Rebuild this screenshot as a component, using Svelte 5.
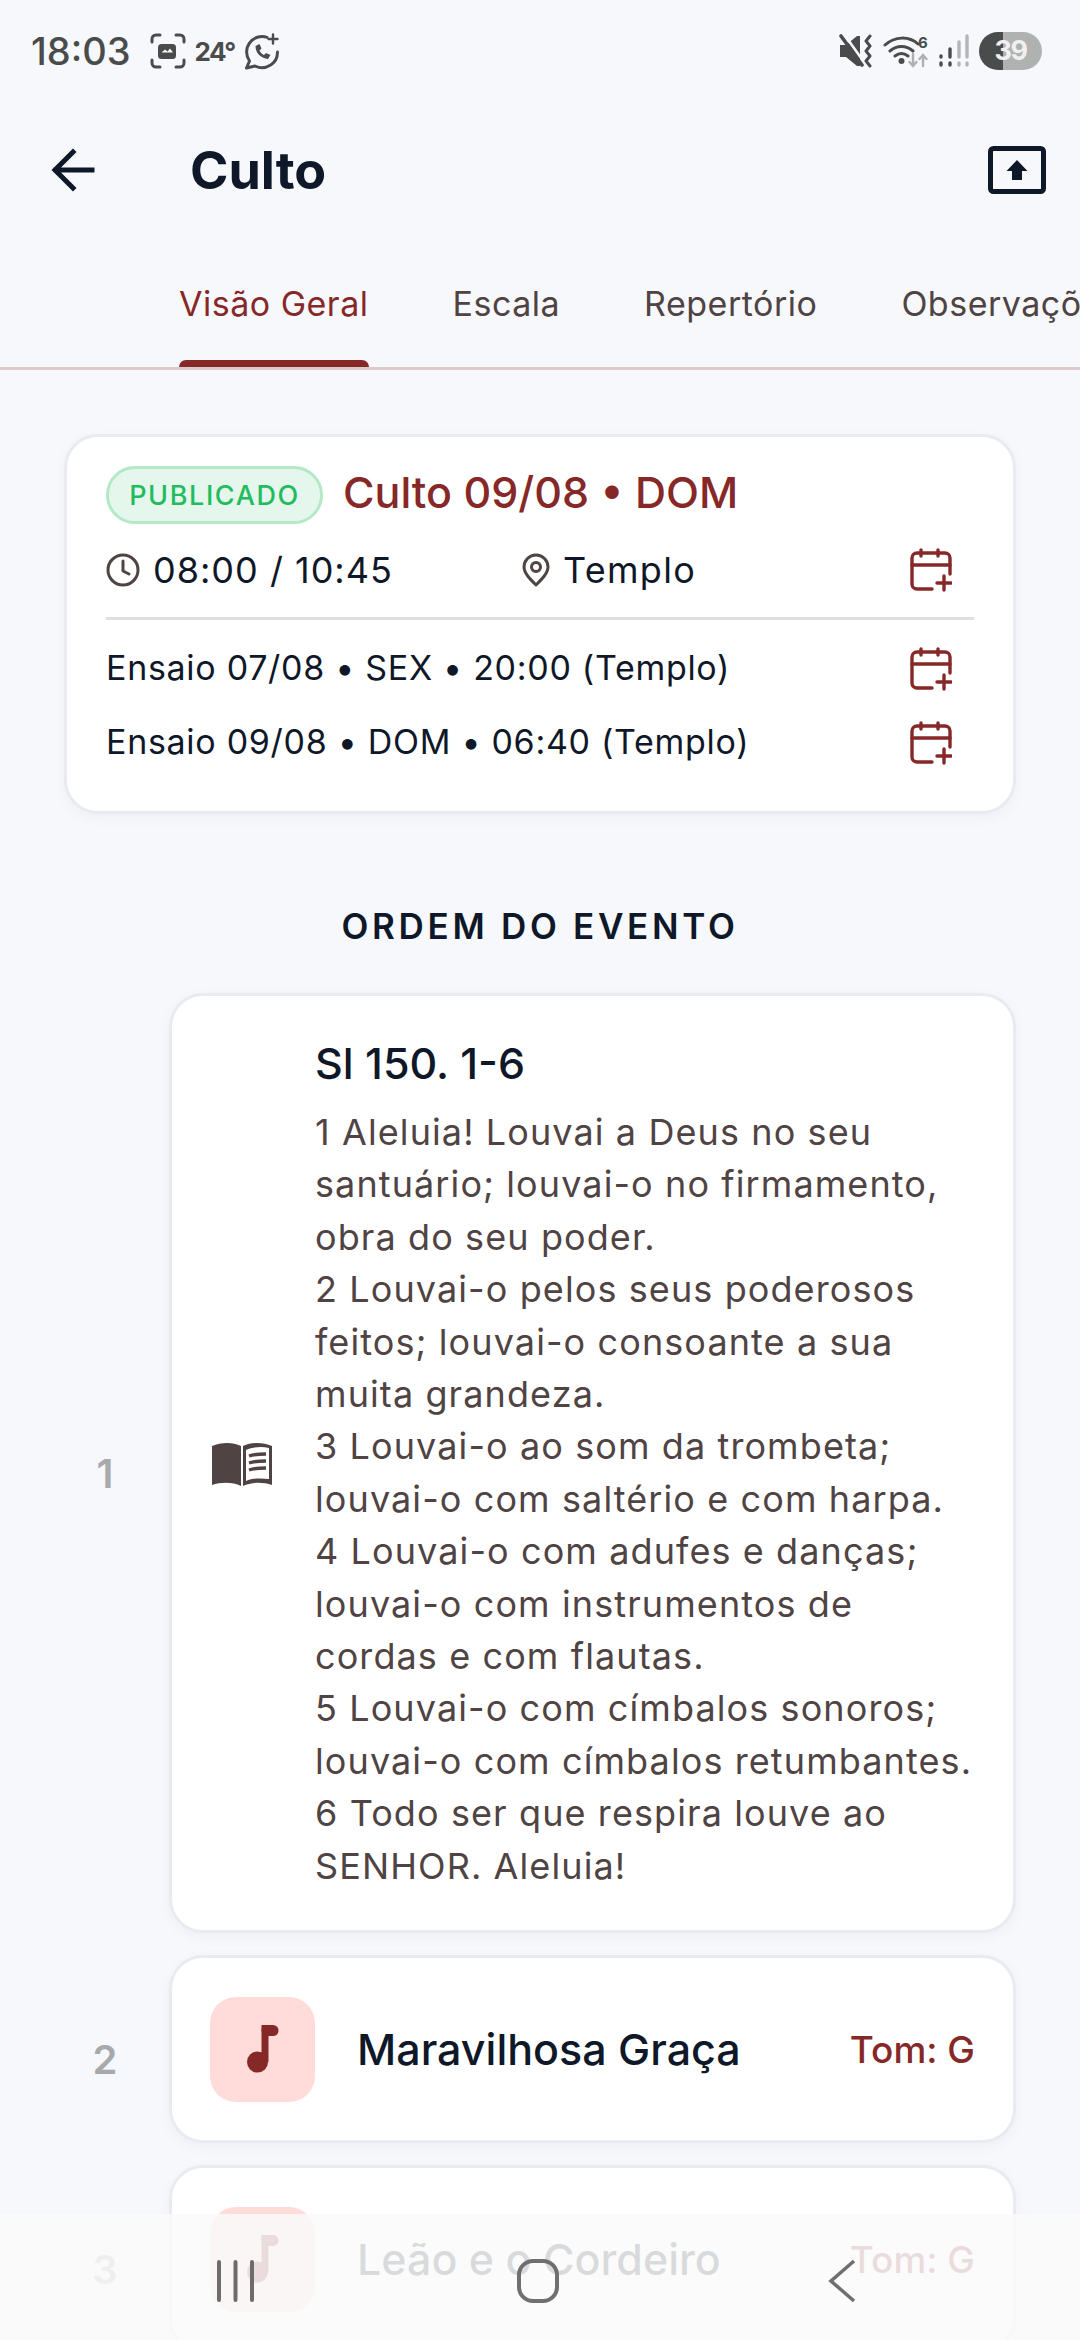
<script>
	const tabs = ["Visão Geral", "Escala", "Repertório", "Observações"];
	const ensaios = [
		"Ensaio 07/08 • SEX • 20:00 (Templo)",
		"Ensaio 09/08 • DOM • 06:40 (Templo)"
	];
	const verses = [
		"1 Aleluia! Louvai a Deus no seu santuário; louvai-o no firmamento, obra do seu poder.",
		"2 Louvai-o pelos seus poderosos feitos; louvai-o consoante a sua muita grandeza.",
		"3 Louvai-o ao som da trombeta; louvai-o com saltério e com harpa.",
		"4 Louvai-o com adufes e danças; louvai-o com instrumentos de cordas e com flautas.",
		"5 Louvai-o com címbalos sonoros; louvai-o com címbalos retumbantes.",
		"6 Todo ser que respira louve ao SENHOR. Aleluia!"
	];
	const songs = [
		{ n: 2, title: "Maravilhosa Graça", tom: "G" },
		{ n: 3, title: "Leão e o Cordeiro", tom: "G" }
	];
</script>

{#snippet calendarPlus()}
	<svg class="cal" viewBox="0 0 42 44" width="42" height="44" fill="none" stroke="#862828" stroke-width="3.4" stroke-linecap="round" stroke-linejoin="round">
		<path d="M22 41H7a5 5 0 0 1-5-5V10a5 5 0 0 1 5-5h28a5 5 0 0 1 5 5v16" />
		<path d="M2 17h38M11 2v6M28 2v6M34 28v14M27 35h14" />
	</svg>
{/snippet}

<div class="screen">
	<div class="status">
		<span class="time">18:03</span>
		<svg width="36" height="36" viewBox="0 0 36 36" fill="none" stroke="#4a4c4c" stroke-width="3" stroke-linecap="round">
			<path d="M2 9V6a4 4 0 0 1 4-4h4M26 2h4a4 4 0 0 1 4 4v3M34 27v3a4 4 0 0 1-4 4h-4M10 34H6a4 4 0 0 1-4-4v-3" />
			<rect x="8" y="11" width="18" height="15" rx="3.500" fill="#4a4c4c" stroke="none" />
			<path d="M11.500 19.500l3.500-3 2.500 2 2.500-3 3 4z" fill="#f6f8fc" stroke="none" />
		</svg>
		<span class="temp">24°</span>
		<svg width="37" height="37" viewBox="0 0 37 37" fill="none" stroke="#4a4c4c" stroke-width="3" stroke-linecap="round">
			<path d="M23 4.300A15.500 15.500 0 0 0 5.500 28L2.500 35 11 33A15.500 15.500 0 0 0 33.500 19" stroke-linejoin="round" />
			<path d="M11.500 13c0 7 5 12 12.500 13l2.500-4-4.500-2-2 2c-2-1-3.500-2.500-4.500-4.500l2-2-2-4.500z" fill="#4a4c4c" stroke="none" />
			<path d="M29 1.500v9M24.500 6h9" stroke-width="2.400" />
		</svg>
		<div class="status-right">
			<svg width="38" height="34" viewBox="0 0 38 34" fill="none">
				<path d="M5 11h6l11-9h3v30h-3L11 23H5z" fill="#4a4c4c" />
				<path d="M9 0l22 31" stroke="#f6f8fc" stroke-width="2.600" />
				<path d="M6 2l21 29" stroke="#4a4c4c" stroke-width="3.600" stroke-linecap="round" />
				<path d="M35 2l-4 5 4 5-4 5 4 5-4 5 4 5" stroke="#4a4c4c" stroke-width="3" stroke-linejoin="round" stroke-linecap="round" />
			</svg>
			<svg class="wifi" width="46" height="34" viewBox="0 0 46 34" fill="none" stroke-linecap="round">
				<path d="M2 11c10-9 24-9 33-1M7 17c7-6 16-6 23 0M12 22c4-3 9-3 13 0" stroke="#4a4c4c" stroke-width="3" />
				<circle cx="18.500" cy="27" r="3" fill="#4a4c4c" />
				<path d="M30 20v11M26.500 28l3.500 4 3.500-4" stroke="#aeb0b0" stroke-width="2.400" />
				<path d="M40 32V21M36.500 25l3.500-4 3.500 4" stroke="#aeb0b0" stroke-width="2.400" />
				<text x="35" y="14" font-size="15" font-weight="700" fill="#4a4c4c" font-family="Inter">6</text>
			</svg>
			<svg width="30" height="34" viewBox="0 0 30 34" fill="none" stroke-width="3.400" stroke-linecap="round">
				<path d="M2 22v1M2 29v2M11 15v8M11 29v2" stroke="#4a4c4c" />
				<path d="M20 8v15M20 29v2M28 2v21M28 29v2" stroke="#b4b6b6" />
			</svg>
			<div class="battery"><span>39</span></div>
		</div>
	</div>

	<header class="topbar">
		<svg class="back" width="44" height="44" viewBox="0 0 44 44" fill="none" stroke="#0f1828" stroke-width="5" stroke-linecap="square">
			<path d="M41 22H5M22 4L4 22l18 18" />
		</svg>
		<h1>Culto</h1>
		<svg class="export" width="58" height="48" viewBox="0 0 58 48" fill="none">
			<rect x="2.500" y="2.500" width="53" height="43" rx="3" stroke="#0f1828" stroke-width="5" />
			<path d="M29 14l10.500 11H34v9H24v-9h-5.500z" fill="#0f1828" />
		</svg>
	</header>

	<nav class="tabs">
		{#each tabs as tab, i}
			<div class="tab" class:active={i === 0}>{tab}</div>
		{/each}
	</nav>

	<main class="content">
		<section class="card summary">
			<div class="head-row">
				<span class="badge">PUBLICADO</span>
				<span class="event-title">Culto 09/08 • DOM</span>
			</div>
			<div class="info-row">
				<span class="info time-info">
					<svg width="34" height="34" viewBox="0 0 34 34" fill="none" stroke="#4f4343" stroke-width="3" stroke-linecap="round" stroke-linejoin="round">
						<circle cx="17" cy="17" r="15" />
						<path d="M17 8v10l6 3" />
					</svg>
					08:00 / 10:45
				</span>
				<span class="info place-info">
					<svg width="28" height="34" viewBox="0 0 28 34" fill="none" stroke="#4f4343" stroke-width="3" stroke-linejoin="round">
						<path d="M14 32C8 26 2 20 2 14a12 12 0 0 1 24 0c0 6-6 12-12 18z" />
						<circle cx="14" cy="14" r="4.500" />
					</svg>
					Templo
				</span>
				{@render calendarPlus()}
			</div>
			<div class="sep"></div>
			{#each ensaios as ensaio}
				<div class="ensaio">
					<span>{ensaio}</span>
					{@render calendarPlus()}
				</div>
			{/each}
		</section>

		<h2>ORDEM DO EVENTO</h2>

		<div class="list">
			<div class="row">
				<span class="num">1</span>
				<article class="card reading">
					<svg class="book" width="60" height="46" viewBox="0 0 60 46">
						<path fill-rule="evenodd" fill="#4f4343" d="M0 4C9 0 21 0 29 4v40c-8-4-20-4-29-1zM31 4c8-4 20-4 29 0v39c-9-3-21-3-29 1zM34 8v31c7-3 15-3 23-2V6c-8-2-16-1-23 2z" />
						<path d="M37 14c6-2 11-2 17-2M37 21c6-2 11-2 17-2M37 28c6-2 11-2 17-2" stroke="#4f4343" stroke-width="3.400" fill="none" />
					</svg>
					<div class="reading-text">
						<h3>Sl 150. 1-6</h3>
						{#each verses as verse}
							<p>{verse}</p>
						{/each}
					</div>
				</article>
			</div>
			{#each songs as song}
				<div class="row">
					<span class="num">{song.n}</span>
					<article class="card song">
						<div class="note-box">
							<svg width="34" height="52" viewBox="0 0 34 52" fill="#862828">
								<circle cx="11.500" cy="39" r="10.500" />
								<rect x="15.500" y="2" width="7" height="37" />
								<rect x="15.500" y="2" width="17" height="11" rx="5.500" />
							</svg>
						</div>
						<span class="song-title">{song.title}</span>
						<span class="tom">Tom: {song.tom}</span>
					</article>
				</div>
			{/each}
		</div>
	</main>

	<div class="sysnav">
		<svg width="38" height="44" viewBox="0 0 38 44" stroke="#6f6b6b" stroke-width="4" stroke-linecap="round" fill="none">
			<path d="M2 3v38M18.500 3v38M35 3v38" />
		</svg>
		<svg width="42" height="44" viewBox="0 0 42 44" fill="none">
			<rect x="2" y="2" width="38" height="40" rx="14" stroke="#6f6f6f" stroke-width="4" />
		</svg>
		<svg width="28" height="44" viewBox="0 0 28 44" fill="none" stroke="#6f6f6f" stroke-width="3.500">
			<path d="M26 2L3 22l23 20" />
		</svg>
	</div>
</div>

<style>
	:global(body) {
		margin: 0;
		background: #f6f8fc;
		font-family: Inter, "Noto Sans", sans-serif;
	}

	.screen {
		position: relative;
		width: 1080px;
		height: 2340px;
		overflow: hidden;
		background: #f6f8fc;
		color: #0f1828;
	}

	.status {
		height: 102px;
		padding: 0 38px 0 31px;
		display: flex;
		align-items: center;
		gap: 9px;
		box-sizing: border-box;
	}

	.time {
		font-size: 38px;
		font-weight: 500;
		color: #4a4c4c;
		margin-right: 10px;
	}

	.temp {
		font-size: 26px;
		font-weight: 700;
		color: #4a4c4c;
		letter-spacing: -1.5px;
	}

	.status-right {
		margin-left: auto;
		display: flex;
		align-items: center;
		gap: 10px;
	}

	.battery {
		width: 63px;
		height: 38px;
		border-radius: 19px;
		background: linear-gradient(90deg, #4a4c4c 0 24px, #b0b2b2 24px);
		color: #f0f0f0;
		font-size: 27px;
		font-weight: 700;
		text-align: center;
		line-height: 38px;
		letter-spacing: -1.5px;
	}

	.topbar {
		height: 136px;
		padding: 0 34px 0 51px;
		display: flex;
		align-items: center;
	}

	.back {
		margin-right: 95px;
	}

	h1 {
		margin: 0;
		font-size: 52px;
		font-weight: 700;
		flex: 1;
	}

	.tabs {
		height: 132px;
		padding-left: 179px;
		display: flex;
		gap: 84px;
		border-bottom: 3px solid #dccbc9;
		box-sizing: border-box;
		white-space: nowrap;
		overflow: hidden;
	}

	.tab {
		position: relative;
		font-size: 34px;
		color: #4f4343;
		padding-top: 45px;
		letter-spacing: 0.5px;
	}

	.tab.active {
		color: #862828;
	}

	.tab.active::after {
		content: "";
		position: absolute;
		left: 0;
		right: 0;
		bottom: 0;
		height: 7px;
		background: #862828;
		border-radius: 7px 7px 0 0;
	}

	.content {
		padding: 64px 64px 0;
	}

	.card {
		background: #fff;
		border: 3px solid #e9ebf0;
		border-radius: 34px;
		box-sizing: border-box;
		box-shadow: 0 4px 14px rgba(15, 24, 40, 0.04);
	}

	.summary {
		height: 380px;
		padding: 29px 39px 0;
	}

	.head-row {
		display: flex;
		align-items: center;
		gap: 20px;
	}

	.badge {
		height: 58px;
		width: 217px;
		box-sizing: border-box;
		border: 3px solid #b4e8c6;
		border-radius: 29px;
		background: #e5f7ec;
		color: #22bb5e;
		font-size: 27px;
		font-weight: 500;
		letter-spacing: 1.6px;
		display: flex;
		align-items: center;
		justify-content: center;
	}

	.event-title {
		font-size: 43px;
		font-weight: 500;
		color: #862828;
		margin-top: -6px;
	}

	.info-row {
		display: flex;
		align-items: center;
		margin-top: 19px;
		height: 54px;
	}

	.info {
		display: flex;
		align-items: center;
		gap: 13px;
		font-size: 36px;
		letter-spacing: 1px;
	}

	.time-info {
		width: 416px;
	}

	.place-info {
		letter-spacing: 1.300px;
	}

	.cal {
		margin-left: auto;
		margin-right: 22px;
	}

	.sep {
		height: 3px;
		background: #e0e0e0;
		margin-top: 20px;
		margin-bottom: 10px;
	}

	.ensaio {
		display: flex;
		align-items: center;
		height: 74px;
		font-size: 34px;
		letter-spacing: 0.7px;
	}

	.ensaio .cal {
		margin-top: 3px;
	}

	h2 {
		margin: 92px 0 0;
		text-align: center;
		font-size: 35px;
		font-weight: 600;
		letter-spacing: 3.700px;
		height: 40px;
		line-height: 40px;
	}

	.list {
		margin-top: 47px;
		display: flex;
		flex-direction: column;
		gap: 22px;
	}

	.row {
		display: flex;
		align-items: center;
	}

	.num {
		width: 82px;
		margin-right: 23px;
		text-align: center;
		font-size: 40px;
		font-weight: 600;
		color: #a7a9ab;
		padding-top: 20px;
	}

	.reading {
		flex: 1;
		display: flex;
		align-items: center;
		padding: 37px 38px 38px 40px;
	}

	.book {
		margin-right: 43px;
		margin-top: 4px;
		flex-shrink: 0;
	}

	.reading-text {
		flex: 1;
	}

	h3 {
		margin: 0 0 13px;
		font-size: 43px;
		font-weight: 500;
		line-height: 60px;
	}

	p {
		margin: 0;
		font-size: 36px;
		line-height: 52.400px;
		letter-spacing: 1.100px;
		color: #4f4343;
	}

	.song {
		flex: 1;
		height: 188px;
		display: flex;
		align-items: center;
		padding: 0 38px;
	}

	.note-box {
		width: 105px;
		height: 105px;
		border-radius: 26px;
		background: #ffdcd9;
		display: flex;
		align-items: center;
		justify-content: center;
		margin-right: 42px;
	}

	.song-title {
		flex: 1;
		font-size: 43px;
		font-weight: 500;
	}

	.tom {
		font-size: 37px;
		font-weight: 500;
		color: #862828;
	}

	.sysnav {
		position: absolute;
		left: 0;
		right: 0;
		bottom: 0;
		height: 126px;
		background: rgba(250, 250, 250, 0.86);
		display: flex;
		align-items: flex-start;
		padding-top: 45px;
		box-sizing: border-box;
	}

	.sysnav svg:nth-child(1) {
		margin-left: 217px;
	}

	.sysnav svg:nth-child(2) {
		margin-left: 262px;
	}

	.sysnav svg:nth-child(3) {
		margin-left: 269px;
	}
</style>
